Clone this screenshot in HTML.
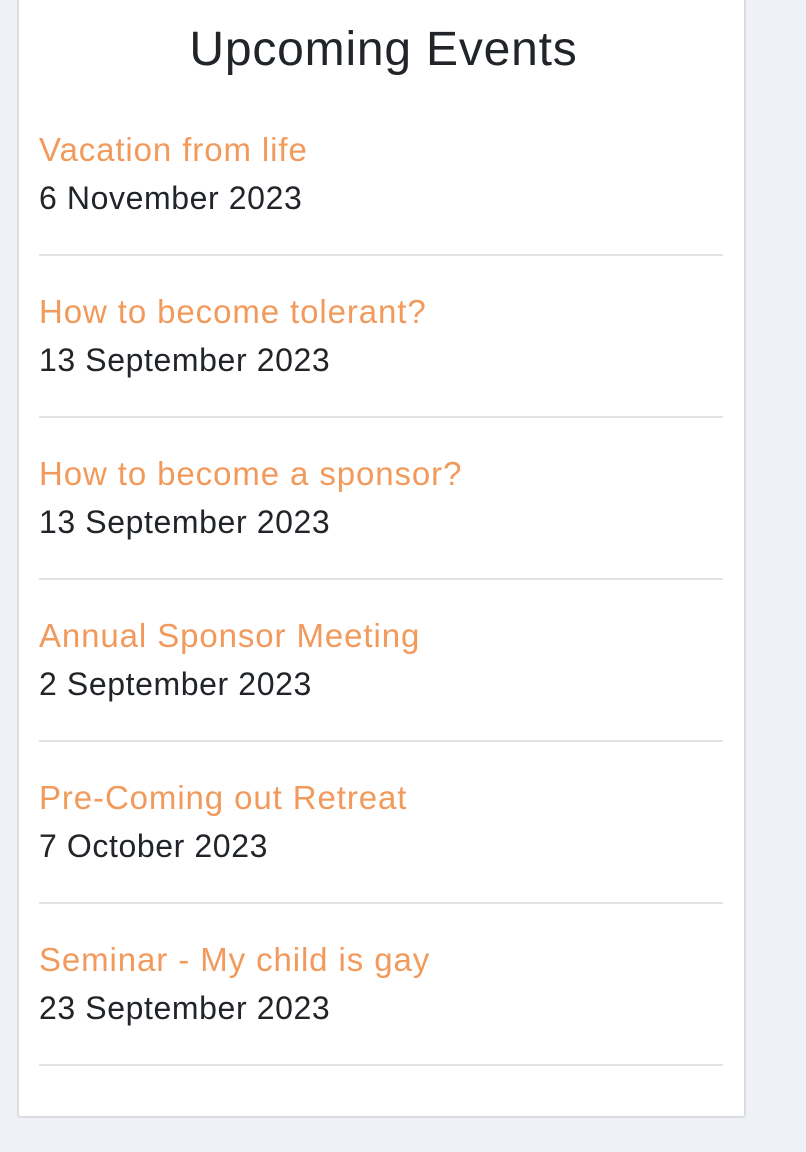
<!DOCTYPE html>
<html><head><style>
html,body{margin:0;padding:0;}
body{width:806px;height:1152px;background:#eef2f7;position:relative;overflow:hidden;font-family:"Liberation Sans",sans-serif;}
.card{position:absolute;left:17px;top:-4px;width:725px;height:1120px;background:#fff;border:2px solid #dcdcde;border-top:none;border-radius:0 0 4px 4px;}
h1{position:absolute;left:0;width:729px;top:0;margin:0;text-align:center;font-weight:400;font-size:48px;color:#212529;line-height:108px;letter-spacing:0.8px;}
.item{position:absolute;left:20px;width:684px;height:162px;border-bottom:2px solid #e3e3e5;box-sizing:border-box;}
.t{position:absolute;top:37px;left:0;font-size:33px;color:#f29a5c;letter-spacing:0.9px;white-space:nowrap;line-height:38px;}
.d{position:absolute;top:85px;left:0;font-size:32px;color:#212529;letter-spacing:0.6px;white-space:nowrap;line-height:38px;}
</style></head><body>
<div class="card">
<h1>Upcoming Events</h1>
<div class="item" style="top:98px"><div class="t">Vacation from life</div><div class="d">6 November 2023</div></div>
<div class="item" style="top:260px"><div class="t">How to become tolerant?</div><div class="d">13 September 2023</div></div>
<div class="item" style="top:422px"><div class="t">How to become a sponsor?</div><div class="d">13 September 2023</div></div>
<div class="item" style="top:584px"><div class="t">Annual Sponsor Meeting</div><div class="d">2 September 2023</div></div>
<div class="item" style="top:746px"><div class="t">Pre-Coming out Retreat</div><div class="d">7 October 2023</div></div>
<div class="item" style="top:908px"><div class="t">Seminar - My child is gay</div><div class="d">23 September 2023</div></div>
</div>
</body></html>
